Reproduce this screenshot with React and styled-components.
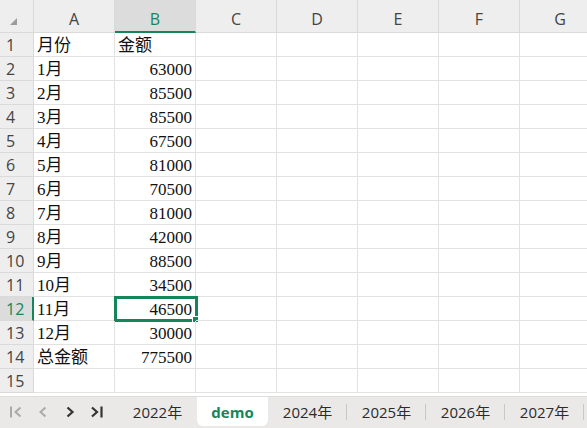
import React from 'react';
import styled, { createGlobalStyle, css } from 'styled-components';

const GREEN = '#16865a';

const GlobalStyle = createGlobalStyle`
  html, body {
    margin: 0;
    padding: 0;
    background: #ffffff;
    overflow: hidden;
  }
  body {
    font-family: "Open Sans", "Noto Sans", "Noto Sans CJK SC", sans-serif;
  }
`;

const Page = styled.div`
  width: 587px;
  height: 428px;
  display: flex;
  flex-direction: column;
  overflow: hidden;
  background: #ffffff;
`;

const Grid = styled.div`
  display: grid;
  grid-template-columns: 34px repeat(7, 81px);
  grid-template-rows: 33px repeat(15, 24px);
  flex: 0 0 auto;
`;

const Corner = styled.div`
  background: #eeeeee;
  border-right: 1px solid #dadada;
  border-bottom: 1px solid #dadada;
  position: relative;
  box-sizing: border-box;

  &::after {
    content: '';
    position: absolute;
    left: 10px;
    top: 18px;
    width: 0;
    height: 0;
    border-left: 7px solid transparent;
    border-bottom: 7px solid #9c9c9c;
  }
`;

const ColHead = styled.div`
  box-sizing: border-box;
  background: ${p => (p.$active ? '#dcdcdc' : '#eeeeee')};
  border-right: 1px solid #dadada;
  border-bottom: ${p => (p.$active ? `2px solid ${GREEN}` : '1px solid #dadada')};
  display: flex;
  align-items: flex-end;
  justify-content: center;
  padding-bottom: ${p => (p.$active ? '1px' : '2px')};
  font-size: 16px;
  color: ${p => (p.$active ? GREEN : '#444444')};
`;

const RowHead = styled.div`
  box-sizing: border-box;
  background: ${p => (p.$active ? '#dcdcdc' : '#eeeeee')};
  border-right: ${p => (p.$active ? `2px solid ${GREEN}` : '1px solid #dadada')};
  border-bottom: 1px solid #dadada;
  display: flex;
  align-items: center;
  padding-left: 6px;
  font-size: 16px;
  color: ${p => (p.$active ? GREEN : '#444444')};
`;

const Cell = styled.div`
  box-sizing: border-box;
  border-right: 1px solid #e2e2e2;
  border-bottom: 1px solid #e2e2e2;
  padding: 2px 3px 0 3px;
  font-family: "Liberation Serif", "Noto Sans CJK SC", serif;
  font-size: 17px;
  line-height: 22px;
  height: 24px;
  text-align: ${p => (p.$num ? 'right' : 'left')};
  color: #111111;
  white-space: nowrap;
  position: relative;

  ${p =>
    p.$selected &&
    css`
      &::before {
        content: '';
        position: absolute;
        left: -1px;
        top: -1px;
        right: -3px;
        bottom: -2px;
        border: 3px solid ${GREEN};
        box-sizing: border-box;
        pointer-events: none;
      }
      &::after {
        content: '';
        position: absolute;
        right: -4px;
        bottom: -3px;
        width: 5px;
        height: 5px;
        background: ${GREEN};
        border: 1px solid #ffffff;
      }
    `}
`;

const Spacer = styled.div`
  height: 3px;
  flex: 0 0 auto;
`;

const TabBar = styled.div`
  flex: 1 1 auto;
  background: #ebe9e7;
  border-top: 1px solid #dddddd;
  display: flex;
  align-items: flex-start;
  white-space: nowrap;
`;

const Nav = styled.div`
  display: flex;
  align-items: center;
  height: 30px;
  padding-left: 8px;
  gap: 11px;
  width: 110px;
  flex: 0 0 auto;
`;

const NavBtn = styled.span`
  width: 16px;
  height: 16px;
  display: flex;
  align-items: center;
  justify-content: center;
  color: ${p => (p.$disabled ? '#aaaaaa' : '#333333')};
`;

const Tabs = styled.div`
  display: flex;
  align-items: flex-start;
`;

const Tab = styled.div`
  height: 29px;
  box-sizing: border-box;
  width: ${p => (p.$active ? '71px' : '79px')};
  flex: 0 0 auto;
  display: flex;
  align-items: center;
  justify-content: center;
  font-size: 15px;
  color: ${p => (p.$active ? GREEN : '#2b2b2b')};
  font-weight: ${p => (p.$active ? 700 : 400)};
  background: ${p => (p.$active ? '#ffffff' : 'transparent')};
  border-radius: ${p => (p.$active ? '0 0 6px 6px' : '0')};
  position: relative;

  ${p =>
    p.$sep &&
    css`
      &::after {
        content: '';
        position: absolute;
        right: 0;
        top: 7px;
        height: 16px;
        width: 1px;
        background: #c8c8c8;
      }
    `}
`;

const cols = ['A', 'B', 'C', 'D', 'E', 'F', 'G'];

const data = [
  ['月份', '金额', false],
  ['1月', '63000', true],
  ['2月', '85500', true],
  ['3月', '85500', true],
  ['4月', '67500', true],
  ['5月', '81000', true],
  ['6月', '70500', true],
  ['7月', '81000', true],
  ['8月', '42000', true],
  ['9月', '88500', true],
  ['10月', '34500', true],
  ['11月', '46500', true],
  ['12月', '30000', true],
  ['总金额', '775500', true],
  ['', '', false],
];

const First = () => (
  <svg width="14" height="14" viewBox="0 0 14 14" fill="none" stroke="currentColor" strokeWidth="2">
    <path d="M2 1.5v11" />
    <path d="M11.5 2.5L6.5 7l5 4.5" />
  </svg>
);
const Prev = () => (
  <svg width="14" height="14" viewBox="0 0 14 14" fill="none" stroke="currentColor" strokeWidth="2">
    <path d="M9.5 2.5L4.5 7l5 4.5" />
  </svg>
);
const Next = () => (
  <svg width="14" height="14" viewBox="0 0 14 14" fill="none" stroke="currentColor" strokeWidth="2.2">
    <path d="M4.5 2.5L9.5 7l-5 4.5" />
  </svg>
);
const Last = () => (
  <svg width="14" height="14" viewBox="0 0 14 14" fill="none" stroke="currentColor" strokeWidth="2.2">
    <path d="M2 2.5L7 7l-5 4.5" />
    <path d="M11.5 1.5v11" />
  </svg>
);

const sheets = ['2022年', 'demo', '2024年', '2025年', '2026年', '2027年'];

export default function App() {
  return (
    <Page>
      <GlobalStyle />
      <Grid>
        <Corner />
        {cols.map(c => (
          <ColHead key={c} $active={c === 'B'}>
            {c}
          </ColHead>
        ))}
        {data.map((row, i) => (
          <React.Fragment key={i}>
            <RowHead $active={i === 11}>{i + 1}</RowHead>
            <Cell>{row[0]}</Cell>
            <Cell $num={row[2]} $selected={i === 11}>
              {row[1]}
            </Cell>
            {cols.slice(2).map(c => (
              <Cell key={c} />
            ))}
          </React.Fragment>
        ))}
      </Grid>
      <Spacer />
      <TabBar>
        <Nav>
          <NavBtn $disabled>
            <First />
          </NavBtn>
          <NavBtn $disabled>
            <Prev />
          </NavBtn>
          <NavBtn>
            <Next />
          </NavBtn>
          <NavBtn>
            <Last />
          </NavBtn>
        </Nav>
        <Tabs>
          {sheets.map((s, i) => (
            <Tab key={s} $active={s === 'demo'} $sep={i >= 2}>
              {s}
            </Tab>
          ))}
        </Tabs>
      </TabBar>
    </Page>
  );
}
